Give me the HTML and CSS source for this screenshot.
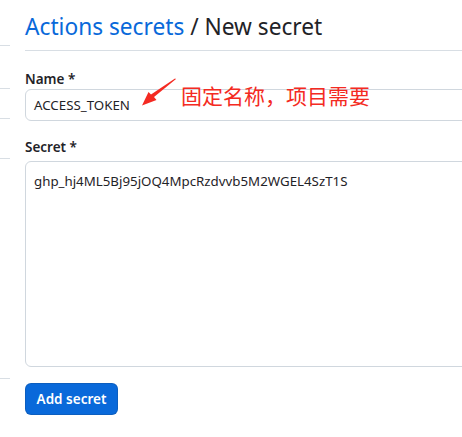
FILE: index.html
```html
<!DOCTYPE html>
<html lang="zh">
<head>
<meta charset="utf-8">
<link rel="stylesheet" href="styles.css">
</head>
<body>
<div class="page">
  <aside class="gutter">
    <div class="g g1"></div>
    <div class="g g2"></div>
    <div class="g g3"></div>
    <div class="g g4"></div>
    <div class="g g5"></div>
  </aside>
  <main class="main">
    <h2 class="title"><a class="crumb">Actions secrets</a> / New secret</h2>
    <form class="form">
      <div class="field field-name">
        <label class="label">Name *</label>
        <div class="input">ACCESS_TOKEN</div>
        <div class="note">
          <svg class="arrow" width="40" height="32" viewBox="0 0 40 32">
            <path d="M36 1 L14 19 L16.5 22 L2 27.5 L8.5 14 L11 16.5 L35 0.5 Z" fill="#f42a22"/>
          </svg>
          <span class="note-text">固定名称，项目需要</span>
        </div>
      </div>
      <div class="field">
        <label class="label label-secret">Secret *</label>
        <div class="textarea">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</div>
      </div>
      <button class="btn" type="button">Add secret</button>
    </form>
  </main>
</div>
</body>
</html>
```
FILE: styles.css
```css
html, body {
  margin: 0;
  padding: 0;
  background: #ffffff;
  overflow: hidden;
}
body {
  font-family: "Noto Sans", "Open Sans", "Noto Sans CJK SC", sans-serif;
  color: #1f2328;
  width: 462px;
  height: 437px;
}
.page {
  display: flex;
  width: 520px;
}
.gutter {
  width: 10px;
  flex: none;
  display: flex;
  flex-direction: column;
}
.g { border-bottom: 1px solid #d8dee4; }
.g1 { height: 45px; }
.g2 { height: 42px; }
.g3 { height: 29px; }
.g4 { height: 39px; }
.g5 { height: 219px; }
.main {
  margin-left: 15px;
  flex: 1;
}
.title {
  margin: 0;
  padding-top: 11px;
  height: 39px;
  font-size: 22.7px;
  font-weight: 400;
  line-height: 32px;
  border-bottom: 1px solid #d8dee4;
  white-space: nowrap;
}
.crumb { color: #0969da; text-decoration: none; }
.form {
  padding-top: 18px;
}
.field { position: relative; }
.label {
  display: block;
  font-size: 13.5px;
  font-weight: 600;
  line-height: 20px;
}
.label-secret { margin-bottom: 4px; }
.input {
  box-sizing: border-box;
  height: 32px;
  border: 1px solid #d0d7de;
  border-radius: 6px;
  padding: 0 8px;
  font-size: 13.3px;
  line-height: 30px;
  white-space: nowrap;
}
.field-name { margin-bottom: 16px; }
.note {
  position: absolute;
  left: 115px;
  top: 9px;
  display: flex;
  align-items: flex-start;
}
.arrow { display: block; }
.note-text {
  margin-left: 1px;
  margin-top: 4px;
  color: #f42a22;
  font-family: "Noto Sans CJK SC", sans-serif;
  font-size: 21px;
  line-height: 26px;
  white-space: nowrap;
}
.textarea {
  box-sizing: border-box;
  height: 206px;
  border: 1px solid #d0d7de;
  border-radius: 6px;
  padding: 9px 8px;
  font-size: 13.3px;
  line-height: 20px;
  white-space: nowrap;
}
.btn {
  margin-top: 16px;
  height: 32px;
  width: 93px;
  border: 1px solid rgba(31,35,40,0.15);
  border-radius: 6px;
  background: #0969da;
  color: #ffffff;
  font-family: inherit;
  font-size: 13.5px;
  font-weight: 600;
  padding: 0;
}
```
